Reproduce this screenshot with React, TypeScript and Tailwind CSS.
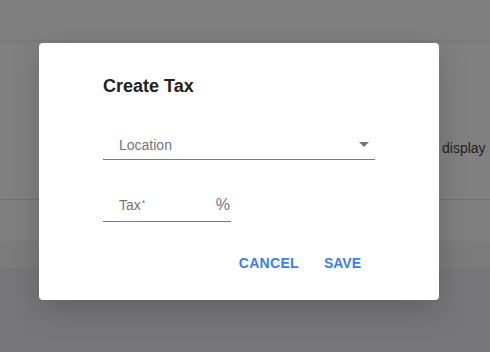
import React from "react";

export default function App() {
  return (
    <div
      className="relative h-[352px] w-full overflow-hidden bg-[#808080] text-[14px]"
      style={{ fontFamily: '"Liberation Sans", Arial, sans-serif' }}
    >
      {/* background page (already dimmed by the scrim) */}
      <div className="flex flex-col">
        <div className="h-[40px] bg-[#7f7f7f] shadow-[0_1px_3px_rgba(0,0,0,0.08)]" />
        <div className="flex h-[159px] flex-row items-start pt-[98px]">
          <div className="w-[442px] shrink-0" />
          <span className="leading-[20px] text-[#1f1f1f]">display</span>
        </div>
        <div className="h-px bg-[#727272]" />
        <div className="h-[41px] bg-[#7f7f7f]" />
        <div className="h-[27px] bg-[#7b7b7b]" />
        <div className="h-[84px] bg-[#77777a]" />
      </div>

      {/* dialog */}
      <div className="absolute inset-0 flex items-start pl-[39px] pt-[43px]">
        <div className="flex h-[257px] w-[400px] flex-col rounded-[4px] bg-white pl-[64px] pt-[31px] shadow-[0_10px_30px_rgba(0,0,0,0.18)]">
          <h2 className="text-[18px] font-bold leading-[24px] text-[#212121]">Create Tax</h2>

          <div className="mt-[37px] flex w-[272px] items-start border-b border-[#7a7a7a] pb-[4px] pl-4 pr-[6px]">
            <span className="flex-1 leading-[20px] text-[#757575]">Location</span>
            <svg width="10" height="5" viewBox="0 0 10 5" className="mt-[7px]">
              <path d="M0 0 L10 0 L5 5 Z" fill="#757575" />
            </svg>
          </div>

          <div className="mt-[35px] flex w-[128px] items-start border-b border-[#7a7a7a] pb-[4px] pl-4 pr-[1px]">
            <span className="flex-1 leading-[20px] text-[#757575]">
              Tax<span className="relative top-[-4px] ml-[1px] text-[9px]">*</span>
            </span>
            <span className="text-[16px] leading-[20px] text-[#757575]">%</span>
          </div>

          <div className="mt-[31px] flex justify-end gap-[25px] pr-[78px]">
            <span className="text-[14px] font-bold leading-[20px] tracking-[0.3px] text-[#3580f2]">CANCEL</span>
            <span className="text-[14px] font-bold leading-[20px] text-[#3580f2]">SAVE</span>
          </div>
        </div>
      </div>
    </div>
  );
}
